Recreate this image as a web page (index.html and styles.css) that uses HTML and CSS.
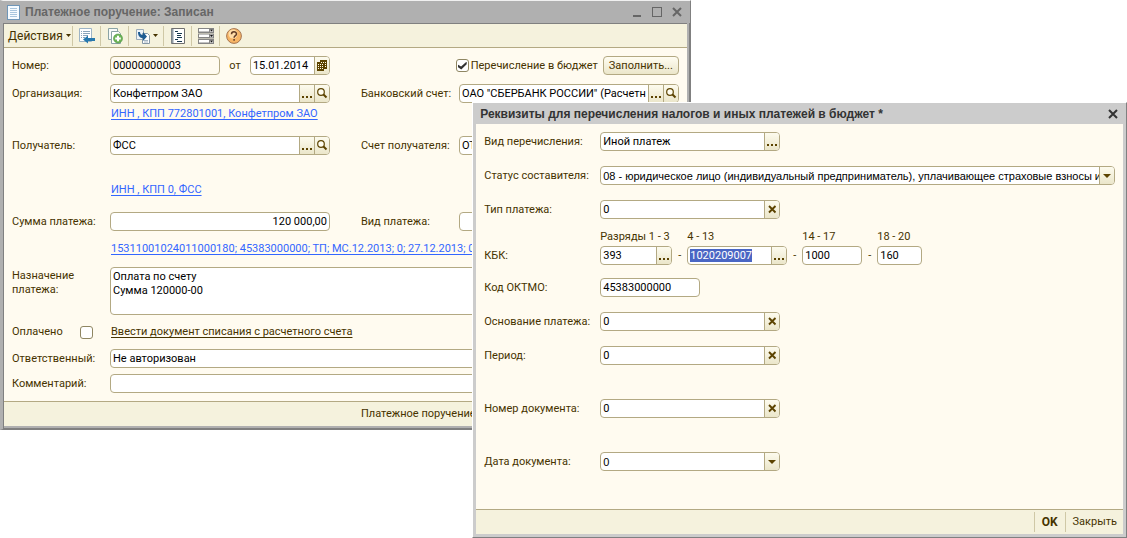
FILE: index.html
```html
<!DOCTYPE html>
<html lang="ru">
<head>
<meta charset="utf-8">
<title>Платежное поручение</title>
<link rel="stylesheet" href="styles.css">
</head>
<body>
<svg class="sprite" aria-hidden="true">
  <symbol id="i-dots" viewBox="0 0 14 17"><path d="M2 11h2v2H2zM6 11h2v2H6zM10 11h2v2h-2z" fill="#5c4300"/></symbol>
  <symbol id="i-search" viewBox="0 0 14 17"><circle cx="6" cy="7" r="3.3" fill="#fffdf0" stroke="#5c4300" stroke-width="1.2"/><path d="M8.5 9.5l3 3" stroke="#5c4300" stroke-width="2"/></symbol>
  <symbol id="i-cross" viewBox="0 0 14 17"><path d="M4 5l6.500 6.500M10.500 5L4 11.500" stroke="#5c4300" stroke-width="1.900"/></symbol>
  <symbol id="i-down" viewBox="0 0 14 17"><path d="M3 7h8l-4 4z" fill="#5c4300"/></symbol>
  <symbol id="i-cal" viewBox="0 0 14 17"><path d="M5 3h7v9H9v2H2V5h3z" fill="#5c4300"/><path d="M6 5h1v1H6zM8 5h1v1H8zM10 5h1v1h-1zM3 7h1v1H3zM5 7h1v1H5zM7 7h1v1H7zM10 7h1v1h-1zM3 9h1v1H3zM5 9h1v1H5zM7 9h1v1H7zM10 9h1v1h-1zM3 11h1v1H3zM5 11h1v1H5zM7 11h1v1H7z" fill="#fffbe8"/></symbol>
</svg>

<section class="window order" aria-label="Платежное поручение">
  <header class="titlebar">
    <svg class="doc-icon" width="15" height="15" viewBox="0 0 15 15"><path d="M1 0h13v15H1z" fill="#6f96b8"/><path d="M2 1h11v13H2z" fill="#f6fbff"/><path d="M4 3.500h7M4 5.500h7M4 7.500h7M4 9.500h7M4 11.500h7" stroke="#a9c6de"/></svg>
    <h1>Платежное поручение: Записан</h1>
    <div class="window-controls">
      <button type="button" aria-label="Свернуть"><svg width="12" height="12"><path d="M2 10h8" stroke="currentColor" stroke-width="2"/></svg></button>
      <button type="button" aria-label="Развернуть"><svg width="12" height="12"><path d="M1 1.500h10M1.500 1v10M10.500 1v10M1 10.500h10" fill="none" stroke="currentColor"/></svg></button>
      <button type="button" aria-label="Закрыть"><svg width="12" height="12"><path d="M2 2l8 8M10 2l-8 8" stroke="currentColor" stroke-width="2"/></svg></button>
    </div>
  </header>
  <div class="toolbar">
    <button type="button" class="tool actions">Действия <svg width="5" height="3"><path d="M0 0h5L2.500 3z" fill="#463300"/></svg></button>
    <button type="button" class="tool" aria-label="Провести"><svg width="16" height="16" viewBox="0 0 16 16"><path d="M.500.500h12v13H.500z" fill="#fff" stroke="#9db4c6"/><path d="M2 3.500h1M2 5.500h1M2 7.500h1M2 9.500h1M4 3.500h7M4 5.500h7M4 7.500h5M4 9.500h2" stroke="#8ba5ba"/><path d="M4 11.500L9 7.500v2.500h7v3H9v2.500z" fill="#2678ad"/></svg></button>
    <button type="button" class="tool" aria-label="Скопировать"><svg width="16" height="16" viewBox="0 0 16 16"><path d="M1.500.500h9v11h-9z" fill="#f7faf8" stroke="#8aa3a5"/><path d="M4.500 3.500h7l2 2v10h-9z" fill="#fff" stroke="#8aa3a5"/><circle cx="11" cy="10.500" r="4.500" fill="#6db457" stroke="#4a943f" stroke-width=".6"/><path d="M11 7.700v5.600M8.200 10.500h5.600" stroke="#fff" stroke-width="2"/></svg></button>
    <button type="button" class="tool wide" aria-label="Ввести на основании"><svg width="16" height="16" viewBox="0 0 16 16"><path d="M1.500 1.500h7v10h-7z" fill="#edf3f7" stroke="#9aabb8"/><path d="M7.500 5.500h5l2 2v8h-7z" fill="#fff" stroke="#8497a5"/><path d="M9 12.500h4M9 14h4" stroke="#a6b6c2"/><path d="M3 4h2c0 2 1 3 3 3V4l4 4.500L8 13v-3C5 10 3 8 3 4z" fill="#1e5c92"/></svg><svg width="5" height="3"><path d="M0 0h5L2.500 3z" fill="#463300"/></svg></button>
    <button type="button" class="tool" aria-label="Список"><svg width="16" height="16" viewBox="0 0 16 16"><path d="M1.500.500h13v15h-13z" fill="#fff" stroke="#6f6f6f"/><path d="M2.500 1v14" stroke="#8f9ba5" stroke-width="2"/><path d="M5 3.500h3M7 5.500h5M7 7.500h4M7 9.500h5M5 11.500h3M7 13.500h5" stroke="#17384f"/></svg></button>
    <button type="button" class="tool" aria-label="Реквизиты"><svg width="16" height="16" viewBox="0 0 16 16"><path d="M0 0h16v5H0zM0 5.500h16v5H0zM0 11h16v5H0z" fill="#858585"/><path d="M1 1h10v2.500H1zM1 6.500h10V9H1zM1 12h10v2.500H1z" fill="#fff"/><path d="M12 1h3v3h-3zM12 6.500h3v3h-3zM12 12h3v3h-3z" fill="#c8c8c8"/><path d="M12 1.500h3l-1.500 2zM12 7h3l-1.500 2zM12 12.500h3l-1.500 2z" fill="#111"/></svg></button>
    <button type="button" class="tool" aria-label="Справка"><svg width="16" height="16" viewBox="0 0 16 16"><circle cx="8" cy="8" r="7.400" fill="#f7b566" stroke="#a57552"/><circle cx="7" cy="6" r="4.500" fill="#ffdda8"/><path d="M5.500 6.300c0-3.200 5-3.200 5-.3 0 1.700-2.400 1.700-2.400 3.700M8.100 11v1.800" fill="none" stroke="#633c25" stroke-width="1.500"/></svg></button>
  </div>
  <form class="order-form">
    <div class="row">
      <label for="num">Номер:</label>
      <div class="group number"><div class="field dim"><input id="num" value="00000000003"></div><label for="date">от</label><div class="field date"><input id="date" value="15.01.2014"><button type="button" aria-label="Календарь"><svg><use href="#i-cal"/></svg></button></div></div>
      <div class="group budget"><label class="tick"><input type="checkbox" checked>Перечисление в бюджет</label><button type="button" class="push">Заполнить...</button></div>
    </div>
    <div class="row gap-m">
      <label for="org">Организация:</label>
      <div class="field"><input id="org" value="Конфетпром ЗАО"><button type="button" aria-label="Выбрать"><svg><use href="#i-dots"/></svg></button><button type="button" aria-label="Открыть"><svg><use href="#i-search"/></svg></button></div>
      <label for="bank" class="second">Банковский счет:</label>
      <div class="field"><input id="bank" value="ОАО &quot;СБЕРБАНК РОССИИ&quot; (Расчетный)"><button type="button" aria-label="Выбрать"><svg><use href="#i-dots"/></svg></button><button type="button" aria-label="Открыть"><svg><use href="#i-search"/></svg></button></div>
    </div>
    <p class="note after-field"><a href="#">ИНН , КПП 772801001, Конфетпром ЗАО</a></p>
    <div class="row gap-l">
      <label for="payee">Получатель:</label>
      <div class="field"><input id="payee" value="ФСС"><button type="button" aria-label="Выбрать"><svg><use href="#i-dots"/></svg></button><button type="button" aria-label="Открыть"><svg><use href="#i-search"/></svg></button></div>
      <label for="acc" class="second">Счет получателя:</label>
      <div class="field"><input id="acc" value="ОТ"></div>
    </div>
    <p class="note gap-xl"><a href="#">ИНН , КПП 0, ФСС</a></p>
    <div class="row gap-l">
      <label for="sum">Сумма платежа:</label>
      <div class="field"><input id="sum" class="num" value="120 000,00"></div>
      <label for="kind" class="second">Вид платежа:</label>
      <div class="field"><input id="kind"></div>
    </div>
    <p class="note gap-m"><a href="#">15311001024011000180; 45383000000; ТП; МС.12.2013; 0; 27.12.2013; 0</a></p>
    <div class="row top gap-m">
      <label for="purpose">Назначение платежа:</label>
      <textarea id="purpose" class="span" rows="3">Оплата по счету
Сумма 120000-00</textarea>
    </div>
    <div class="row gap-s">
      <label class="tick paid">Оплачено<input type="checkbox"></label>
      <p class="note span"><a href="#" class="dark">Ввести документ списания с расчетного счета</a></p>
    </div>
    <div class="row gap-s">
      <label for="resp">Ответственный:</label>
      <div class="field span"><input id="resp" value="Не авторизован"></div>
    </div>
    <div class="row gap-xs">
      <label for="comment">Комментарий:</label>
      <div class="field span"><input id="comment"></div>
    </div>
  </form>
  <footer class="statusbar"><button type="button" class="flat">Платежное поручение</button></footer>
</section>

<section class="window details" role="dialog" aria-label="Реквизиты для перечисления">
  <header class="titlebar">
    <h1>Реквизиты для перечисления налогов и иных платежей в бюджет *</h1>
    <div class="window-controls"><button type="button" aria-label="Закрыть"><svg width="12" height="12"><path d="M2 2l8 8M10 2l-8 8" stroke="currentColor" stroke-width="2"/></svg></button></div>
  </header>
  <form class="details-form">
    <div class="line"><label for="d1">Вид перечисления:</label><div class="field std"><input id="d1" value="Иной платеж"><button type="button" aria-label="Выбрать"><svg><use href="#i-dots"/></svg></button></div></div>
    <div class="line"><label for="d2">Статус составителя:</label><div class="field"><select id="d2"><option>08 - юридическое лицо (индивидуальный предприниматель), уплачивающее страховые взносы и</option></select><span class="arrow"><svg><use href="#i-down"/></svg></span></div></div>
    <div class="line"><label for="d3">Тип платежа:</label><div class="field std"><input id="d3" value="0"><button type="button" aria-label="Очистить"><svg><use href="#i-cross"/></svg></button></div></div>
    <div class="line kbk"><label for="k1">КБК:</label>
      <div class="parts">
        <label for="k1">Разряды 1 - 3</label><span></span><label for="k2">4 - 13</label><span></span><label for="k3">14 - 17</label><span></span><label for="k4">18 - 20</label>
        <div class="field"><input id="k1" value="393"><button type="button" aria-label="Выбрать"><svg><use href="#i-dots"/></svg></button></div><span>-</span>
        <div class="field picked"><input id="k2" value="1020209007"><button type="button" aria-label="Выбрать"><svg><use href="#i-dots"/></svg></button></div><span>-</span>
        <div class="field"><input id="k3" value="1000"></div><span>-</span>
        <div class="field"><input id="k4" value="160"></div>
      </div>
    </div>
    <div class="line tight"><label for="d4">Код ОКТМО:</label><div class="field short"><input id="d4" value="45383000000"></div></div>
    <div class="line"><label for="d5">Основание платежа:</label><div class="field std"><input id="d5" value="0"><button type="button" aria-label="Очистить"><svg><use href="#i-cross"/></svg></button></div></div>
    <div class="line"><label for="d6">Период:</label><div class="field std"><input id="d6" value="0"><button type="button" aria-label="Очистить"><svg><use href="#i-cross"/></svg></button></div></div>
    <div class="line apart"><label for="d7">Номер документа:</label><div class="field std"><input id="d7" value="0"><button type="button" aria-label="Очистить"><svg><use href="#i-cross"/></svg></button></div></div>
    <div class="line apart"><label for="d8">Дата документа:</label><div class="field std"><select id="d8"><option>0</option></select><span class="arrow"><svg><use href="#i-down"/></svg></span></div></div>
  </form>
  <footer class="statusbar end"><button type="button" class="flat strong">OK</button><button type="button" class="flat">Закрыть</button></footer>
</section>
</body>
</html>
```

FILE: styles.css
```css
* { box-sizing: border-box; }
:root {
  --cream: #fffbf0;
  --bar: #f5f2dd;
  --edge: #b3a983;
  --ink: #463300;
}
body {
  margin: 0;
  min-height: 100vh;
  position: relative;
  background: #fff;
  color: var(--ink);
  font: 11px/14px Roboto, "Liberation Sans", sans-serif;
}
button, input, select, textarea { font: inherit; color: #000; margin: 0; padding: 0; border: 0; background: none; border-radius: 0; outline: 0; }
button { color: var(--ink); }
h1, p { margin: 0; }
h1 { font: 700 12px/14px "Liberation Sans", sans-serif; flex: 1; white-space: nowrap; overflow: hidden; }
svg { display: block; flex: none; }
.sprite { position: absolute; width: 0; height: 0; }

/* Windows */
.window { position: absolute; display: flex; flex-direction: column; }
.order { left: 0; top: 0; width: 61.3%; border: 3px solid #b0b0b0; border-top: 1px solid #f0f0f0; border-left-width: 3px; box-shadow: inset 0 0 0 1px #808080; border-bottom: 1px solid #808080; border-right: 1px solid #808080; padding: 0 3px 3px 1px; background: #b0b0b0; }
.details { top: 102px; right: 0; width: 58.1%; border: 1px solid #fff; border-right-color: #808080; border-bottom-color: #808080; background: #ccc; padding: 0 3px 3px; }
.titlebar { display: flex; align-items: center; height: 22px; padding: 0 4px; gap: 4px; }
.order .titlebar { color: #666; background: #b0b0b0; margin: 0 -3px 0 -1px; padding-left: 3px; padding-right: 7px; }
.details .titlebar { color: #333; height: 21px; }
.window-controls { display: flex; gap: 8px; }
.window-controls button { color: inherit; width: 12px; height: 12px; }

.toolbar { display: flex; align-items: center; height: 25px; border-top: 1px solid #808080; border-bottom: 1px solid var(--edge); background: var(--bar); padding-left: 4px; }
.tool { display: flex; align-items: center; justify-content: center; gap: 2px; width: 28px; height: 20px; border-left: 1px solid #cfc8a6; }
.tool.actions { width: 64px; gap: 3px; justify-content: flex-start; border-left: 0; font-size: 12px; }
.tool.wide { width: 35px; }

/* Fields */
.field, textarea { border: 1px solid var(--edge); border-radius: 4px; background: #fff; }
.field { display: flex; height: 19px; min-width: 0; overflow: hidden; }
.field input, .field select { flex: 1; min-width: 0; width: 0; padding: 0 2px; height: 17px; appearance: none; }
.field select { font-family: "Liberation Sans", sans-serif; padding-right: 0; }
.field input.num { text-align: right; }
.field button, .arrow { flex: none; width: 15px; border-left: 1px solid var(--edge); background: linear-gradient(#fdfbee, #ebe6ca); }
.field svg { width: 14px; height: 17px; }
.dim { background: var(--cream); }
label { white-space: nowrap; }
input[type="checkbox"] { appearance: none; flex: none; width: 13px; height: 13px; border: 1px solid #8f8662; border-radius: 3px; background: #fff; display: grid; place-items: center; }
input[type="checkbox"]:checked::before { content: ""; width: 9px; height: 8px; background: #333; clip-path: polygon(0 38%, 38% 62%, 100% 0, 100% 34%, 40% 100%, 0 70%); }
.push { border: 1px solid var(--edge); border-radius: 4px; background: linear-gradient(#fffdf2, #ebe6ca); width: 76px; height: 19px; }

/* Payment order */
.order-form { background: var(--cream); padding: 8px; }
.row { display: grid; grid-template-columns: 98px minmax(0, 1fr) 129px minmax(0, 1fr); align-items: center; }
.row.top { align-items: start; }
.row.top > label { white-space: normal; padding-top: 2px; }
.row .second { padding-left: 31px; }
.span { grid-column: 2 / -1; }
.group { display: flex; align-items: center; min-width: 0; }
.number { justify-content: space-between; }
.number .dim { width: 110px; }
.number .date { width: 80px; }
.budget { grid-column: 3 / -1; justify-content: flex-end; gap: 5px; }
.tick { display: flex; align-items: center; gap: 2px; }
.paid { justify-content: space-between; padding-right: 17px; }
textarea { display: block; width: 100%; height: 48px; padding: 2px; resize: none; overflow: hidden; }
.note { line-height: 18px; padding-left: 99px; white-space: nowrap; }
.note.span { padding-left: 1px; }
a { color: #36f; text-underline-offset: 2px; }
a.dark { color: var(--ink); }
.after-field { margin-top: 2px; }
.gap-xs { margin-top: 6px; }
.gap-s { margin-top: 8px; }
.gap-m { margin-top: 9px; }
.gap-l { margin-top: 13px; }
.gap-xl { margin-top: 26px; }

.statusbar { display: flex; align-items: center; height: 25px; border-top: 1px solid var(--edge); background: var(--bar); }
.order .statusbar { padding-left: 357px; }
.statusbar.end { justify-content: flex-end; }
.end .flat { height: 20px; padding: 0 7px; border-left: 1px solid #cfc8a6; }
.end .flat + .flat { padding-right: 6px; }
.strong { font-weight: 700; font-size: 12px; }

/* Budget details */
.details-form { background: var(--cream); padding: 8px 8px 38px; display: flex; flex-direction: column; gap: 15px; }
.line { display: grid; grid-template-columns: 116px minmax(0, 1fr); align-items: center; }
.std { width: 180px; }
.short { width: 100px; }
.kbk { align-items: end; margin-top: -4px; }
.kbk > label { padding-bottom: 2px; }
.parts { display: grid; grid-template-columns: 72px 15px 100px 15px 60px 15px 45px; row-gap: 2px; align-items: center; }
.parts span:not(.arrow) { text-align: center; }
.tight { margin-top: -2px; }
.apart { margin-top: 19px; }
.picked input { flex: none; width: auto; field-sizing: content; height: 13px; padding: 0; margin: 2px; background: #4a66c4; color: #fff; }
.picked button { margin-left: auto; }
```
